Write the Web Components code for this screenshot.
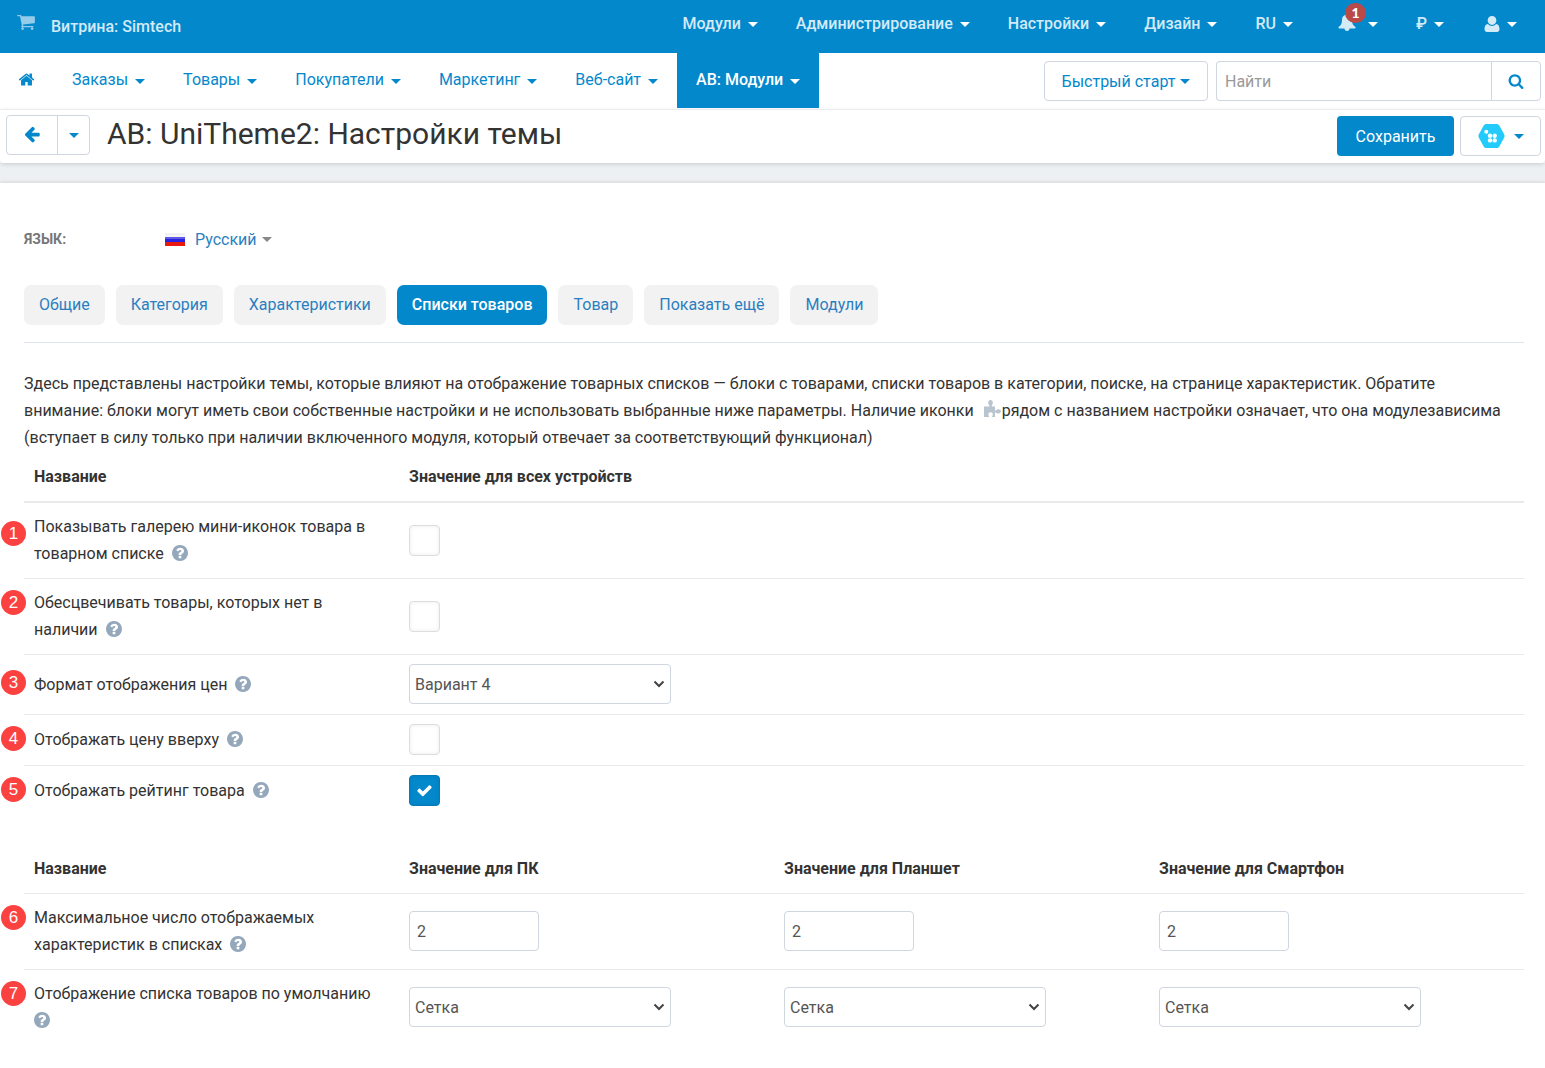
<!DOCTYPE html>
<html lang="ru">
<head>
<meta charset="utf-8">
<meta name="viewport" content="width=device-width, initial-scale=1">
<title>AB: UniTheme2: Настройки темы</title>
<style>
  html { --blue: #0388cc; --line: #e9eaec; --field: #cfd6e0; --ink: #333; }
  body { margin: 0; background: #fff; color: var(--ink); font: 16px/27px Roboto, "Liberation Sans", sans-serif; }
</style>
</head>
<body>
<admin-app></admin-app>

<script>
const base = `<style>
  *, *::before, *::after { box-sizing: border-box; }
  a { color: inherit; text-decoration: none; }
  button, input, select { font: inherit; color: inherit; margin: 0; }
</style>`;

const define = (name, html) => customElements.define(name, class extends HTMLElement {
  connectedCallback() {
    if (this.shadowRoot) return;
    const root = this.attachShadow({ mode: 'open' });
    root.innerHTML = base + (typeof html === 'function' ? html(this) : html);
  }
});

const icons = {
  home: ['0 0 1792 1792', '<path d="M1472 992v480q0 26-19 45t-45 19h-384v-384h-256v384h-384q-26 0-45-19t-19-45v-480q0-1 .5-3t.5-3l575-474 575 474q1 2 1 6zm223-69l-62 74q-8 9-21 11h-3q-13 0-21-7l-692-577-692 577q-12 8-24 7-13-2-21-11l-62-74q-8-10-7-23.5t11-21.5l719-599q32-26 76-26t76 26l244 204v-195q0-14 9-23t23-9h192q14 0 23 9t9 23v408l219 182q10 8 11 21.5t-7 23.5z"/>'],
  search: ['0 0 1792 1792', '<path d="M1216 832q0-185-131.5-316.5t-316.5-131.5-316.5 131.5-131.5 316.5 131.5 316.5 316.5 131.5 316.5-131.5 131.5-316.5zm512 832q0 52-38 90t-90 38q-54 0-90-38l-343-342q-179 124-399 124-143 0-273.5-55.5t-225-150-150-225-55.5-273.5 55.5-273.5 150-225 225-150 273.5-55.5 273.5 55.5 225 150 150 225 55.5 273.5q0 220-124 399l343 343q37 37 37 90z"/>'],
  back: ['0 0 1792 1792', '<path d="M1664 896v128q0 53-32.5 90.5t-84.5 37.5h-704l293 294q38 36 38 90t-38 90l-75 76q-37 37-90 37-52 0-91-37l-651-652q-37-37-37-90 0-52 37-91l651-650q38-38 91-38 52 0 90 38l75 74q38 38 38 91t-38 91l-293 293h704q52 0 84.5 37.5t32.5 90.5z"/>'],
  help: ['128 128 1536 1536', '<path d="M1024 1376v-192q0-14-9-23t-23-9h-192q-14 0-23 9t-9 23v192q0 14 9 23t23 9h192q14 0 23-9t9-23zm256-672q0-88-55.5-163t-138.5-116-170-41q-243 0-371 213-15 24 8 42l132 100q7 6 19 6 16 0 25-12 53-68 86-92 34-24 86-24 48 0 85.5 26t37.5 59q0 38-20 61t-68 45q-63 28-115.5 86.5t-52.5 125.5v36q0 14 9 23t23 9h192q14 0 23-9t9-23q0-19 21.5-49.5t54.5-49.5q32-18 49-28.5t46-35 44.5-48 28-60.5 12.5-81zm384 192q0 209-103 385.5t-279.5 279.5-385.5 103-385.5-103-279.5-279.5-103-385.5 103-385.5 279.5-279.5 385.5-103 385.5 103 279.5 279.5 103 385.5z"/>'],
  cart: ['64 256 1664 1408', '<path d="M704 1536q0 52-38 90t-90 38-90-38-38-90 38-90 90-38 90 38 38 90zm896 0q0 52-38 90t-90 38-90-38-38-90 38-90 90-38 90 38 38 90zm128-1088v512q0 24-16.5 42.5t-40.5 21.5l-1044 122q13 60 13 70 0 16-24 64h920q26 0 45 19t19 45-19 45-45 19h-1024q-26 0-45-19t-19-45q0-11 8-31.5t16-36 21.5-40 15.5-29.5l-177-823h-204q-26 0-45-19t-19-45 19-45 45-19h256q16 0 28.5 6.5t19.5 15.5 13 24.5 8 26 5.5 29.5 4.5 26h1201q26 0 45 19t19 45z"/>'],
  check: ['100 200 1592 1400', '<path d="M1671 566q0 40-28 68l-724 724-136 136q-28 28-68 28t-68-28l-136-136-362-362q-28-28-28-68t28-68l136-136q28-28 68-28t68 28l294 295 656-657q28-28 68-28t68 28l136 136q28 28 28 68z"/>'],
  user: ['0 0 16 16', '<path d="M8 0c2.600 0 4.300 1.900 4.300 4.300S10.600 9 8 9 3.700 6.700 3.700 4.300 5.400 0 8 0z"/><path d="M3.900 8C1.500 8.300.5 10.300.5 13.200c0 1.600 1 2.800 2.600 2.800h9.800c1.600 0 2.600-1.200 2.600-2.800 0-2.900-1-4.900-3.400-5.200C11 9.200 9.600 9.900 8 9.900S5 9.200 3.900 8z"/>'],
  bell: ['0 0 18 18', '<path d="M9 0c.8 0 1.300.6 1.300 1.300v.4c2.300.6 3.700 2.500 3.700 5 0 3.900 1 5.700 3.500 7.300v.8c0 .5-.3.800-.8.800H11.500c0 1.400-1 2.400-2.500 2.400s-2.500-1-2.500-2.400H1.300c-.5 0-.8-.3-.8-.8V14C3 12.400 4 10.600 4 6.700c0-2.500 1.400-4.400 3.700-5v-.4C7.700.6 8.200 0 9 0z"/>'],
  puzzle: ['0 0 17 17', '<path d="M0 6.500h5.200c.3 0 .5-.3.300-.7C5 5.200 4.200 4 4.200 2.600 4.200 1 5.200 0 6.500 0s2.300 1 2.300 2.600c0 1.300-.7 2.400-1.100 3.100-.2.400 0 .8.400.8H11v3.600c0 .5.400.7.800.4.600-.5 1.500-1.200 2.600-1.200 1.500 0 2.600.8 2.600 2s-1 2.100-2.500 2.100c-1.100 0-1.900-.5-2.700-1-.4-.2-.8 0-.8.500V17H7.900c.2-.8.9-1.400.9-2.600 0-1.300-.9-2.100-2.200-2.100s-2.200.8-2.200 2.100c0 1.200.7 1.800.9 2.600H0z"/>'],
  logo: ['0 0 27 26', '<path fill="#22cbfb" d="M8.500 1h10c1.200 0 2.200.6 2.800 1.600l4.800 8.600c.6 1.100.6 2.500 0 3.600l-4.800 8.600c-.6 1-1.600 1.600-2.800 1.600h-10c-1.200 0-2.200-.6-2.800-1.600L.9 14.800c-.6-1.100-.6-2.500 0-3.600l4.800-8.600C6.300 1.600 7.300 1 8.500 1z"/><g fill="#fff"><circle cx="8.300" cy="8.700" r="2"/><circle cx="12" cy="12.700" r="2.200"/><circle cx="16.700" cy="12.700" r="2.200"/><circle cx="12" cy="17.400" r="2.200"/><circle cx="16.700" cy="17.400" r="2.200"/></g>'],
  chevron: ['0 0 12 8', '<path d="M1.500 1.500 6 6l4.500-4.500" fill="none" stroke="#444" stroke-width="2"/>']
};

define('ui-icon', el => {
  const [box, art] = icons[el.getAttribute('name')];
  const w = el.getAttribute('w'), h = el.getAttribute('h') || w;
  return `<style>:host{display:inline-block;flex:none;line-height:0}svg{display:block;fill:currentColor}</style>
  <svg width="${w}" height="${h}" viewBox="${box}" aria-hidden="true">${art}</svg>`;
});

define('ui-caret', `<style>
  :host{display:inline-block;flex:none;width:10px;height:5px}
  i{display:block;border:5px solid transparent;border-top-color:currentColor;border-bottom:0}
</style><i></i>`);

define('top-item', `<style>
  a{display:flex;align-items:center;gap:7px;color:#d3eaf7;font-weight:500;line-height:20px}
  ui-caret{color:#fff}
</style><a href="#"><slot></slot><ui-caret></ui-caret></a>`);

define('top-bar', `<style>
  :host{display:block;background:var(--blue);color:#d3eaf7}
  header{display:flex;justify-content:space-between;height:53px;padding:0 28px 5px 17px}
  .store{display:flex;align-items:center;gap:16px;font-weight:500}
  .store ui-icon{opacity:.7;padding-bottom:4px}
  .store span{padding-top:5px}
  nav{display:flex;align-items:center;gap:38px}
  .bell{position:relative;display:block;padding:1px 5px 0 7px}
  .count{position:absolute;top:-9px;left:14px;width:21px;height:20px;border-radius:10px;background:#b94a48;color:#fff;font:900 14px/20px Lato,sans-serif;text-align:center}
  .user{padding-left:2px}
</style>
<header>
  <a class="store" href="#"><ui-icon name="cart" w="18" h="15"></ui-icon><span>Витрина: Simtech</span></a>
  <nav>
    <top-item>Модули</top-item><top-item>Администрирование</top-item><top-item>Настройки</top-item>
    <top-item>Дизайн</top-item><top-item>RU</top-item>
    <top-item><span class="bell"><ui-icon name="bell" w="18"></ui-icon><span class="count">1</span></span></top-item>
    <top-item>₽</top-item>
    <top-item><ui-icon class="user" name="user" w="16"></ui-icon></top-item>
  </nav>
</header>`);

define('nav-item', `<style>
  a{display:flex;align-items:center;gap:7px;height:55px;padding:0 19px 2px;color:var(--blue)}
  ui-caret{margin-top:4px}
  :host([active]) a{background:var(--blue);color:#fff;font-weight:500}
</style><a href="#"><slot></slot><ui-caret></ui-caret></a>`);

define('main-nav', `<style>
  :host{display:block;background:#fff;border-bottom:1px solid #f3f4f5;color:var(--blue)}
  .row{display:flex;justify-content:space-between;height:56px}
  nav,.tools{display:flex}
  .home{padding:16px 18px 0}
  .tools{gap:8px;padding:8px 4px 0 0}
  button{display:flex;align-items:center;justify-content:center;height:40px;background:#fff;border:1px solid var(--field);border-radius:4px;cursor:pointer}
  .quick{gap:5px;width:164px;padding:0}
  form{display:flex;width:325px}
  input{flex:1;min-width:0;height:40px;padding:0 8px;border:1px solid var(--field);border-right:0;border-radius:4px 0 0 4px;outline:0}
  input::placeholder{color:#999;opacity:1}
  form button{width:50px;border-radius:0 4px 4px 0;padding:0}
</style>
<div class="row">
  <nav>
    <a class="home" href="#" aria-label="Главная"><ui-icon name="home" w="17"></ui-icon></a>
    <nav-item>Заказы</nav-item><nav-item>Товары</nav-item><nav-item>Покупатели</nav-item>
    <nav-item>Маркетинг</nav-item><nav-item>Веб-сайт</nav-item><nav-item active>АВ: Модули</nav-item>
  </nav>
  <div class="tools">
    <button class="quick">Быстрый старт<ui-caret></ui-caret></button>
    <form><input type="search" placeholder="Найти" aria-label="Найти"><button type="button" aria-label="Искать"><ui-icon name="search" w="16"></ui-icon></button></form>
  </div>
</div>`);

define('title-bar', `<style>
  :host{display:block;position:relative;background:#fff;border-radius:0 0 4px 4px;box-shadow:0 1px 4px rgba(0,0,0,.16)}
  .row{display:flex;align-items:flex-start;height:53px;padding:5px 4px 0 6px}
  button{display:flex;align-items:center;justify-content:center;height:40px;padding:0;background:#fff;border:1px solid var(--field);border-radius:4px;color:var(--blue);cursor:pointer}
  .back{width:52px;border-radius:4px 0 0 4px}
  .back ui-icon{padding-bottom:2px}
  .more{width:33px;margin-left:-1px;border-radius:0 4px 4px 0}
  h1{flex:1;margin:0;padding-left:17px;font-size:30px;line-height:38px;font-weight:400}
  .actions{display:flex;gap:6px;padding-top:1px}
  .save{width:117px;border:0;background:var(--blue);color:#fff}
  .addon{width:81px;gap:9px}
</style>
<div class="row">
  <button class="back" aria-label="Назад"><ui-icon name="back" w="18"></ui-icon></button>
  <button class="more" aria-label="История"><ui-caret></ui-caret></button>
  <h1>AB: UniTheme2: Настройки темы</h1>
  <div class="actions">
    <button class="save">Сохранить</button>
    <button class="addon" aria-label="Модуль"><ui-icon name="logo" w="27" h="26"></ui-icon><ui-caret></ui-caret></button>
  </div>
</div>`);

define('language-picker', `<style>
  :host{display:flex;align-items:center}
  b{width:141px;color:#777;font-size:14px;font-weight:700}
  a{display:flex;align-items:center;gap:5px;color:#2a7fc0}
  svg{margin-right:5px}
  ui-caret{color:#888}
</style>
<b>ЯЗЫК:</b>
<a href="#"><svg width="20" height="13" viewBox="0 0 20 13" aria-hidden="true"><path fill="#f1f1f1" d="M0 0h20v4H0z"/><path fill="#2a22dc" d="M0 4h20v5H0z"/><path fill="#e8190f" d="M0 9h20v4H0z"/><path fill="#fff" opacity=".25" d="M0 2h20v4H0z"/></svg>Русский<ui-caret></ui-caret></a>`);

define('tab-pill', `<style>
  a{display:block;height:40px;padding:0 15px;border-radius:7px;background:#f3f2f3;color:#2a7fc0;line-height:39px;white-space:nowrap}
  :host([active]) a{background:var(--blue);color:#fff;font-weight:500}
</style><a href="#"><slot></slot></a>`);

define('section-tabs', `<style>
  :host{display:flex;gap:11px;padding-bottom:17px;border-bottom:1px solid #dfe3ee}
</style><slot></slot>`);

define('help-tip', `<style>
  :host{display:inline-block;vertical-align:-2px;line-height:0;color:#95a8bb}
</style><ui-icon name="help" w="16"></ui-icon>`);

define('step-pin', `<style>
  :host{position:absolute;left:-23px;width:25px;height:25px;border-radius:50%;background:#fc4241;color:#fff;font:17px/25px "Liberation Sans",sans-serif;text-align:center}
</style><slot></slot>`);

define('select-box', el => `<style>
  :host{display:grid;width:262px}
  select{grid-area:1/1;height:40px;padding:0 28px 0 5px;appearance:none;background:#fff;border:1px solid var(--field);border-radius:4px;color:#555}
  ui-icon{grid-area:1/1;place-self:center end;margin-right:6px;pointer-events:none}
</style>
<select aria-label="${el.getAttribute('label')}"><option>${el.getAttribute('value')}</option></select><ui-icon name="chevron" w="12" h="8"></ui-icon>`);

define('text-box', el => `<style>
  input{display:block;width:130px;height:40px;padding:0 7px;border:1px solid var(--field);border-radius:4px;color:#555;outline:0}
</style><input type="text" aria-label="${el.getAttribute('label')}" value="${el.getAttribute('value')}">`);

define('check-box', el => `<style>
  :host{display:grid;width:31px;color:#fff}
  input{grid-area:1/1;appearance:none;width:31px;height:31px;border:1px solid #ddd;border-radius:4px;background:#fff;box-shadow:inset 0 0 4px rgba(0,0,0,.08)}
  input:checked{background:var(--blue);border-color:#047ab8}
  ui-icon{grid-area:1/1;place-self:center;pointer-events:none}
</style><input type="checkbox" aria-label="${el.getAttribute('label')}" ${el.hasAttribute('checked') ? 'checked' : ''}><ui-icon name="check" w="15" h="13"></ui-icon>`);

/* Row: step number, y of the step pin inside the row, label, control kind, values. */
const tables = {
  all: {
    heads: ['Название', 'Значение для всех устройств'],
    rows: [
      [1, 31, 'Показывать галерею мини-иконок товара в товарном списке', 'check', ['']],
      [2, 24, 'Обесцвечивать товары, которых нет в наличии', 'check', ['']],
      [3, 28, 'Формат отображения цен', 'select', ['Вариант 4']],
      [4, 24, 'Отображать цену вверху', 'check', ['']],
      [5, 24, 'Отображать рейтинг товара', 'check', ['checked']]
    ]
  },
  devices: {
    heads: ['Название', 'Значение для ПК', 'Значение для Планшет', 'Значение для Смартфон'],
    rows: [
      [6, 24, 'Максимальное число отображаемых характеристик в списках', 'text', ['2', '2', '2']],
      [7, 24, 'Отображение списка товаров по умолчанию', 'select', ['Сетка', 'Сетка', 'Сетка']]
    ]
  }
};
const controls = {
  check: (v, label) => `<check-box label="${label}" ${v}></check-box>`,
  text: (v, label) => `<text-box label="${label}" value="${v}"></text-box>`,
  select: (v, label) => `<select-box label="${label}" value="${v}"></select-box>`
};

define('settings-table', el => {
  const { heads, rows } = tables[el.getAttribute('data')];
  return `<style>
    :host{display:block}
    table{width:100%;border-collapse:separate;border-spacing:0;table-layout:fixed}
    th,td{padding:9px 10px 10px;text-align:left;vertical-align:middle;font-weight:400}
    thead th{height:50px;font-weight:700;border-bottom:1px solid var(--line)}
    :host([strong]) thead th{border-bottom-width:2px}
    th:first-child{width:25%}
    tbody th{position:relative;padding-right:20px}
    tbody tr+tr>*{border-top:1px solid var(--line)}
    .label{padding-right:4px}
    step-pin{top:calc(var(--y) * 1px - 13px)}
    .wide>*{height:75px}
    tr+.wide>*{height:76px}
  </style>
  <table>
    <thead><tr>${heads.map(h => `<th scope="col">${h}</th>`).join('')}</tr></thead>
    <tbody>${rows.map(([n, y, label, kind, values]) => `<tr${label.length > 30 ? ' class="wide"' : ''}>
      <th scope="row"><step-pin style="--y:${y}">${n}</step-pin><span class="label">${label}</span> <help-tip></help-tip></th>
      ${values.map(v => `<td>${controls[kind](v, label)}</td>`).join('')}</tr>`).join('')}
    </tbody>
  </table>`;
});

define('admin-app', `<style>
  :host{display:block}
  .strip{height:20px;background:#edf0f2}
  main{background:#fff;box-shadow:0 -1px 3px rgba(0,0,0,.1);position:relative;padding:43px 21px 22px 24px}
  section-tabs{margin-top:32px}
  p{margin:27px 15px 2px 0}
  .puzzle{margin:0 1px 0 6px;color:#b8c4cf;vertical-align:-1px}
  settings-table+settings-table{margin-top:28px}
</style>
<top-bar></top-bar>
<main-nav></main-nav>
<title-bar></title-bar>
<div class="strip"></div>
<main>
  <language-picker></language-picker>
  <section-tabs>
    <tab-pill>Общие</tab-pill><tab-pill>Категория</tab-pill><tab-pill>Характеристики</tab-pill>
    <tab-pill active>Списки товаров</tab-pill><tab-pill>Товар</tab-pill><tab-pill>Показать ещё</tab-pill><tab-pill>Модули</tab-pill>
  </section-tabs>
  <p>Здесь представлены настройки темы, которые влияют на отображение товарных списков — блоки с товарами, списки товаров в категории, поиске, на странице характеристик. Обратите <wbr>внимание: блоки могут иметь свои собственные настройки и не использовать выбранные ниже параметры. Наличие иконки <ui-icon class="puzzle" name="puzzle" w="17"></ui-icon>рядом с названием настройки означает, что она модулезависима <wbr>(вступает в силу только при наличии включенного модуля, который отвечает за соответствующий функционал)</p>
  <settings-table data="all" strong></settings-table>
  <settings-table data="devices"></settings-table>
</main>`);
</script>
</body>
</html>
